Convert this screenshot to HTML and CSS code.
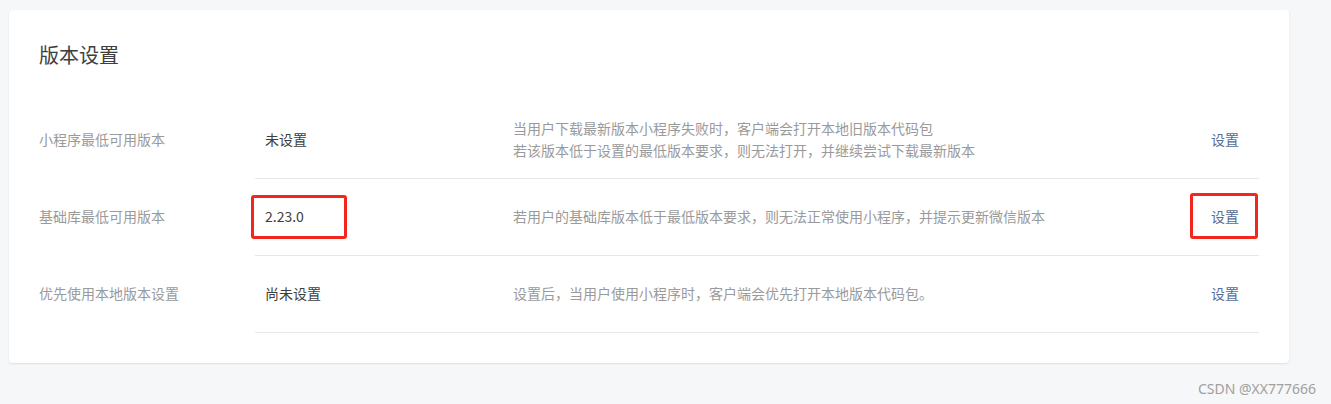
FILE: index.html
```html
<!DOCTYPE html>
<html>

<head>
    <title>版本设置</title>
    <link rel="stylesheet" href="styles.css">
</head>

<body>

    <div class="card">
        <h2 class="card-title">版本设置</h2>

        <div class="row">
            <div class="row-label">小程序最低可用版本</div>
            <div class="row-body">
                <div class="row-value">未设置</div>
                <div class="row-desc">
                    当用户下载最新版本小程序失败时，客户端会打开本地旧版本代码包<br>
                    若该版本低于设置的最低版本要求，则无法打开，并继续尝试下载最新版本
                </div>
                <div class="row-op"><a href="#">设置</a></div>
            </div>
        </div>

        <div class="row">
            <div class="row-label">基础库最低可用版本</div>
            <div class="row-body">
                <div class="row-value marked">2.23.0</div>
                <div class="row-desc">若用户的基础库版本低于最低版本要求，则无法正常使用小程序，并提示更新微信版本</div>
                <div class="row-op marked"><a href="#">设置</a></div>
            </div>
        </div>

        <div class="row">
            <div class="row-label">优先使用本地版本设置</div>
            <div class="row-body">
                <div class="row-value">尚未设置</div>
                <div class="row-desc">设置后，当用户使用小程序时，客户端会优先打开本地版本代码包。</div>
                <div class="row-op"><a href="#">设置</a></div>
            </div>
        </div>
    </div>

    <div class="watermark">CSDN @XX777666</div>

</body>

</html>
```

FILE: styles.css
```css
body {
    margin: 0;
    background: #f6f7f9;
    font-family: "Noto Sans CJK SC", "Noto Sans", sans-serif;
    font-size: 14px;
    color: #3e3e3e;
}

.card {
    width: 1280px;
    box-sizing: border-box;
    margin: 10px 0 0 9px;
    padding: 30px;
    background: #fff;
    border-radius: 4px;
    box-shadow: 0 1px 2px rgba(0, 0, 0, 0.1);
}

.card-title {
    margin: 0 0 30px;
    padding-bottom: 2px;
    height: 30px;
    font-size: 20px;
    font-weight: normal;
    line-height: 30px;
    color: #3e3e3e;
}

.row {
    display: flex;
    height: 77px;
}

.row-label {
    width: 216px;
    flex: none;
    box-sizing: border-box;
    padding-bottom: 3px;
    display: flex;
    align-items: center;
    color: #9a9a9a;
}

.row-body {
    flex: 1;
    display: flex;
    border-bottom: 1px solid #e7e7eb;
}

.row-value {
    width: 258px;
    box-sizing: border-box;
    padding: 0 0 2px 10px;
    display: flex;
    align-items: center;
    position: relative;
}

.row-desc {
    flex: 1;
    padding-bottom: 2px;
    display: flex;
    align-items: center;
    color: #9a9a9a;
    line-height: 22px;
}

.row-op {
    width: 69px;
    box-sizing: border-box;
    padding: 0 20px 2px 0;
    display: flex;
    align-items: center;
    justify-content: flex-end;
    position: relative;
}

.row-op a {
    color: #576b95;
    text-decoration: none;
}

/* red annotation boxes */
.marked::after {
    content: "";
    position: absolute;
    box-sizing: border-box;
    border: 3px solid #f3261b;
    border-radius: 3px;
}

.row-value.marked::after {
    left: -4px;
    top: 16px;
    width: 96px;
    height: 44px;
}

.row-op.marked::after {
    left: 0;
    top: 14px;
    width: 68px;
    height: 46px;
}

.watermark {
    text-align: right;
    padding: 16px 15px 0 0;
    font-family: "Noto Sans", sans-serif;
    font-size: 14px;
    color: #a0a0a0;
}
```
